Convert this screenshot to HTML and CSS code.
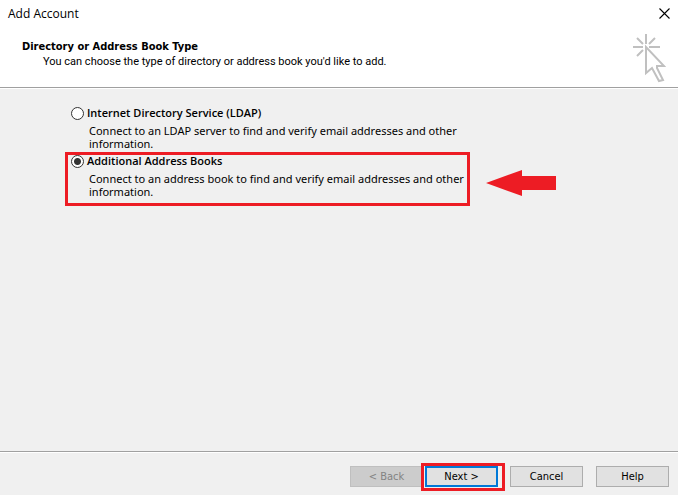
FILE: index.html
```
<!DOCTYPE html>
<html lang="en">
<head>
    <meta charset="utf-8">
    <title>Add Account</title>
    <link rel="stylesheet" href="styles.css">
</head>
<body>
    <form class="dialog">
        <div class="titlebar">
            <span class="title">Add Account</span>
            <button type="button" class="close" aria-label="Close">
                <svg width="11" height="11" viewBox="0 0 11 11"><path d="M0.5 0.5 L10.5 10.5 M10.5 0.5 L0.5 10.5" stroke="#000" stroke-width="1.1"/></svg>
            </button>
        </div>

        <header class="header">
            <div>
                <h1 class="heading">Directory or Address Book Type</h1>
                <p class="subheading">You can choose the type of directory or address book you'd like to add.</p>
            </div>
            <!-- click cursor -->
            <svg class="cursor" width="34" height="50" viewBox="0 0 34 50" fill="none" stroke="#c0c0c0" stroke-width="2">
                <path d="M14 1V11 M1 14H11 M17 14H28 M5 5L11 11 M23 5L17 11 M5 23L11 17"/>
                <path d="M14 14V40L20 35L27 48L31 47L25 35V33H32Z"/>
            </svg>
        </header>

        <main class="content">
            <div class="option">
                <input type="radio" name="type" id="ldap" class="radio" aria-describedby="ldap-desc">
                <label for="ldap" class="option-label">Internet Directory Service (LDAP)</label>
                <p id="ldap-desc" class="option-desc">Connect to an LDAP server to find and verify email addresses and other information.</p>
            </div>
            <div class="option marked">
                <input type="radio" name="type" id="books" class="radio" aria-describedby="books-desc" checked>
                <label for="books" class="option-label">Additional Address Books</label>
                <p id="books-desc" class="option-desc">Connect to an address book to find and verify email addresses and other information.</p>
                <svg class="arrow" width="70" height="26" viewBox="0 0 70 26"><path d="M0 13 L36 0 V6 H70 V20 H36 V26 Z" fill="#ed1c24"/></svg>
            </div>
        </main>

        <footer class="footer">
            <div class="steps">
                <button type="button" class="btn" disabled>&lt; Back</button>
                <span class="next"><button type="button" class="btn btn-default">Next &gt;</button></span>
            </div>
            <button type="button" class="btn">Cancel</button>
            <button type="button" class="btn">Help</button>
        </footer>
    </form>
</body>
</html>
```
FILE: styles.css
```
*, *::after { box-sizing: border-box; }
body {
    margin: 0;
    background: #f0f0f0;
    color: #000;
    font: 11px/13px "Noto Sans", sans-serif;
}
h1, p { margin: 0; }

.dialog {
    display: flex;
    flex-direction: column;
    min-height: 100vh;
}

.titlebar {
    display: flex;
    align-items: center;
    justify-content: space-between;
    height: 27px;
    padding: 0 8px;
    background: #fff;
}
.title { font: 12px/16px "Open Sans", sans-serif; }
.close {
    display: flex;
    padding: 0;
    border: 0;
    background: none;
}

.header {
    display: flex;
    justify-content: space-between;
    height: 61px;
    padding: 6px 12px 0 22px;
    border-bottom: 1px solid #a0a0a0;
    background: #fff;
}
.heading {
    padding-top: 6px;
    font-family: "DejaVu Sans Condensed", sans-serif;
    font-size: 11px;
    line-height: 15px;
}
.subheading {
    padding-left: 21px;
    font-family: Roboto, sans-serif;
    line-height: 15px;
}

.content {
    flex: 1;
    padding: 15px 71px 0;
    border-top: 1px solid #fff;
}
.option {
    position: relative;
    display: grid;
    grid-template-columns: 13px 1fr;
    column-gap: 3px;
    align-items: center;
    width: 396px;
    padding-bottom: 2px;
}
.radio {
    appearance: none;
    width: 13px;
    height: 13px;
    margin: 0;
    border: 1px solid #333;
    border-radius: 50%;
    background: #fff;
}
.radio:checked { background: radial-gradient(circle, #333 3px, #fff 4px); }
.option-label {
    font-family: "Open Sans", sans-serif;
    font-weight: 600;
    line-height: 18px;
}
.option-desc {
    grid-column: 1 / 3;
    padding: 2px 0 0 18px;
}

/* red callouts */
.marked::after {
    content: "";
    position: absolute;
    top: 0;
    left: -6px;
    right: -3px;
    height: 54px;
    border: 3px solid #ed1c24;
    pointer-events: none;
}
.arrow {
    position: absolute;
    top: 18px;
    left: 415px;
}

.footer {
    display: flex;
    justify-content: flex-end;
    gap: 13px;
    padding: 14px 9px 8px;
    border-top: 1px solid #a0a0a0;
    box-shadow: inset 0 1px #fff;
}
.steps {
    display: flex;
    gap: 2px;
    margin-right: -1px;
}
.btn {
    width: 73px;
    height: 21px;
    padding: 0;
    border: 1px solid #adadad;
    background: #e1e1e1;
    color: #000;
    font-family: "DejaVu Sans Condensed", sans-serif;
    font-size: 11px;
}
.btn:disabled {
    border-color: #bfbfbf;
    background: #ccc;
    color: #838383;
}
.btn-default { border: 2px solid #0078d7; }
.next {
    position: relative;
    display: flex;
}
.next::after {
    content: "";
    position: absolute;
    inset: -3px -7px -4px -4px;
    border: 3px solid #ed1c24;
    pointer-events: none;
}
```
